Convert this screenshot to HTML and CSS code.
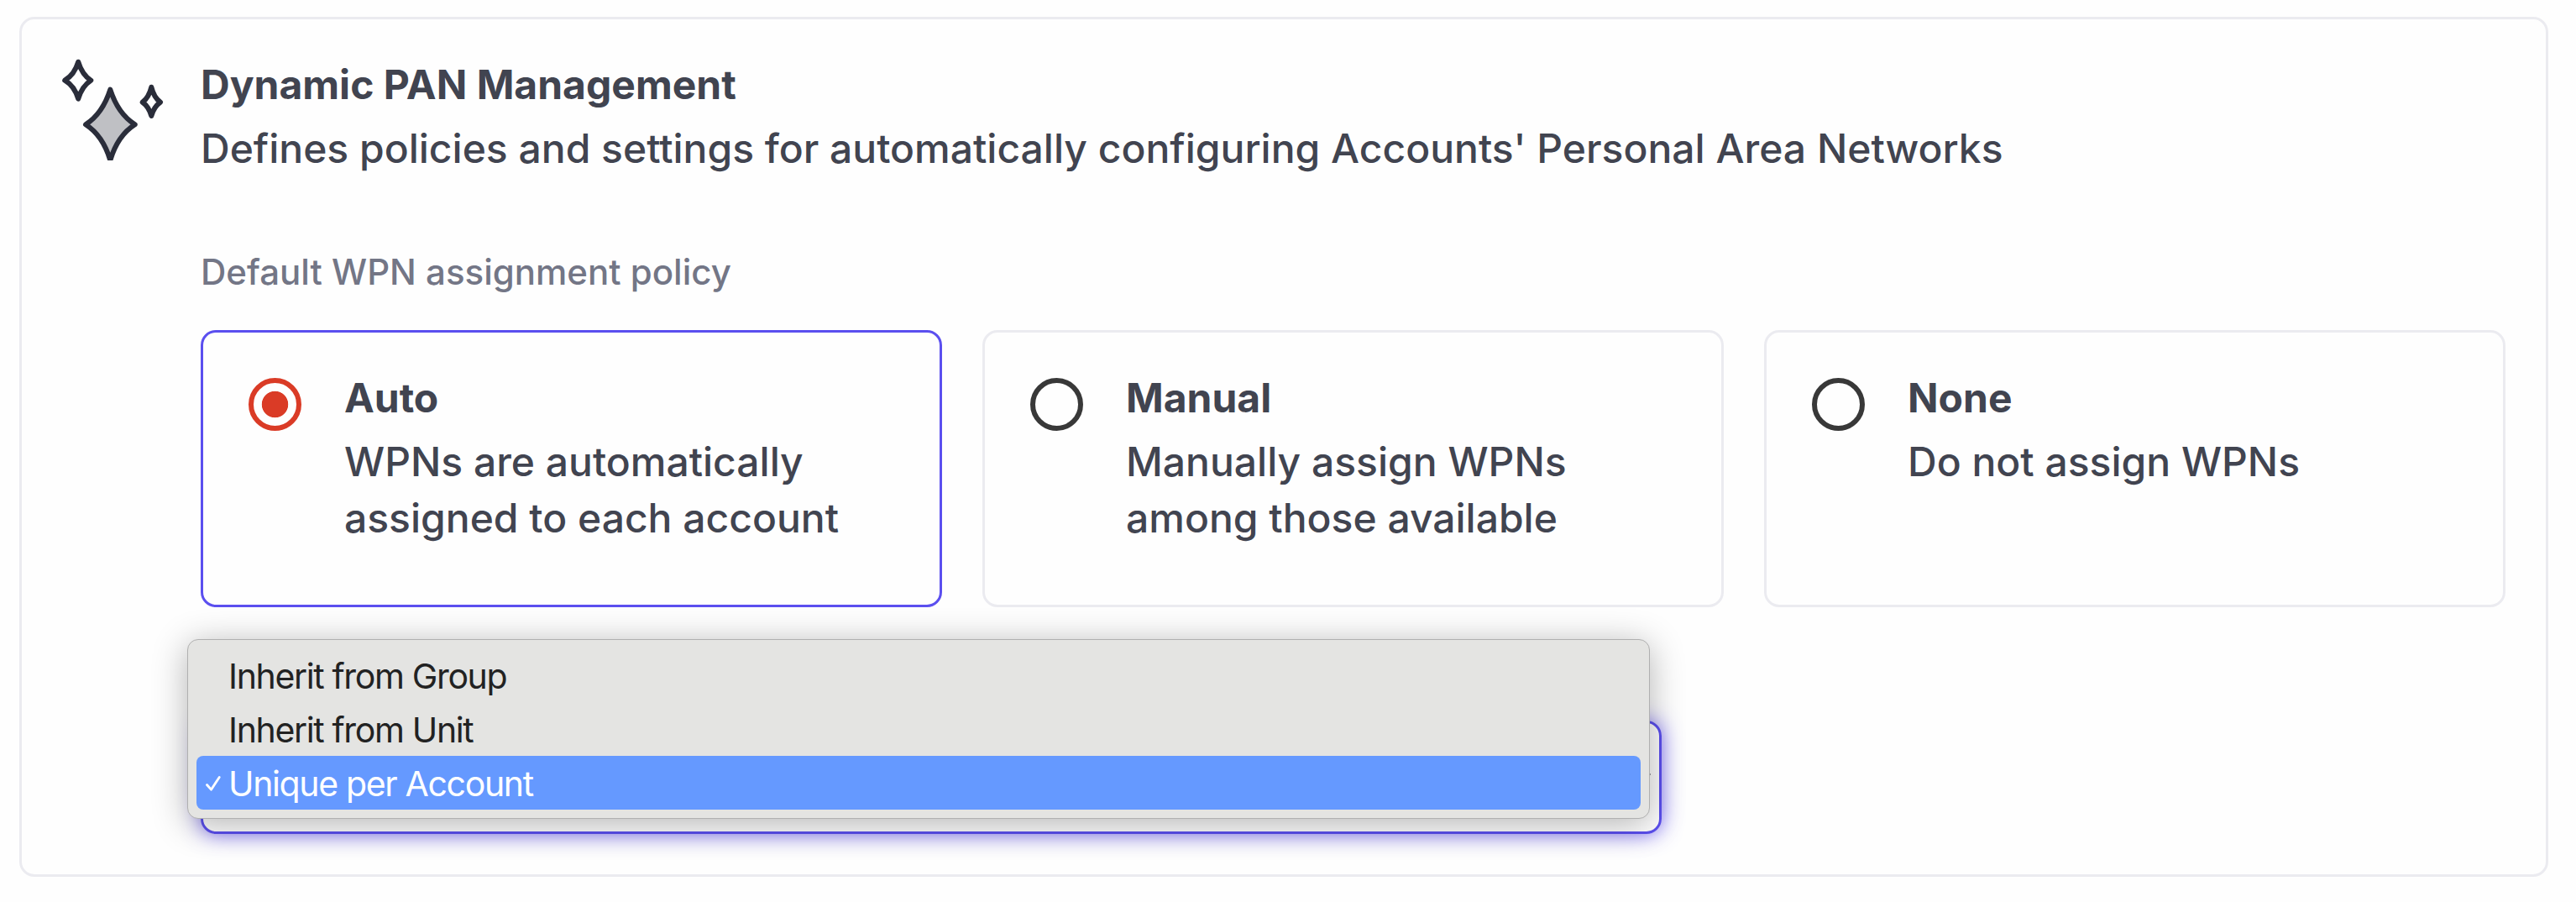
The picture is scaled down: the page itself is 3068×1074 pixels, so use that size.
FILE: index.html
```html
<!DOCTYPE html>
<html lang="en">
<head>
<meta charset="utf-8">
<title>Dynamic PAN Management</title>
<link rel="stylesheet" href="styles.css">
</head>
<body>
<section class="panel">
  <svg class="panel-icon" viewBox="0 0 128 124" fill="none" stroke="#2a2d3a" stroke-width="6" stroke-linejoin="round">
    <path d="M22.200 6.700Q26.700 22 37.300 28.700Q26.700 35.400 22.200 50.700Q17.700 35.400 6.200 28.700Q17.700 22 22.200 6.700Z"/>
    <path d="M109.300 36.700Q112.300 49 120 54.700Q112.300 60 109.300 71Q106.300 60 98.700 54.700Q106.300 49 109.300 36.700Z"/>
    <path fill="#bfc0c4" d="M60.300 39.700Q69.500 68.500 89.700 81.300Q69 94.500 60.300 124Q51.600 94.500 31 81.300Q51.100 68.500 60.300 39.700Z"/>
  </svg>
  <div class="panel-body">
    <h2 class="title">Dynamic PAN Management</h2>
    <p class="text">Defines policies and settings for automatically configuring Accounts' Personal Area Networks</p>
    <p class="label">Default WPN assignment policy</p>
    <div class="options">
      <div class="option option-selected">
        <span class="radio radio-on"></span>
        <div>
          <h3 class="title">Auto</h3>
          <p class="text">WPNs are automatically<br>assigned to each account</p>
        </div>
      </div>
      <div class="option">
        <span class="radio"></span>
        <div>
          <h3 class="title">Manual</h3>
          <p class="text">Manually assign WPNs<br>among those available</p>
        </div>
      </div>
      <div class="option">
        <span class="radio"></span>
        <div>
          <h3 class="title">None</h3>
          <p class="text">Do not assign WPNs</p>
        </div>
      </div>
    </div>
    <div class="select">
      <svg class="chevron" viewBox="0 0 24 14" fill="none" stroke="#414450" stroke-width="3"><path d="M1 1L12 12L23 1"/></svg>
      <ul class="menu">
        <li class="item">Inherit from Group</li>
        <li class="item">Inherit from Unit</li>
        <li class="item item-active">
          <svg class="check" viewBox="0 0 20 20" fill="none" stroke="#fff" stroke-width="2.800" stroke-linecap="round" stroke-linejoin="round"><path d="M2.500 11.500L7.500 17.200L17.200 2.500"/></svg>Unique per Account</li>
      </ul>
    </div>
  </div>
</section>
</body>
</html>
```
FILE: styles.css
```css
* { box-sizing: border-box; margin: 0; padding: 0; }
body {
  padding: 20px 33px 30px 23px;
  background: #fefefe;
  color: #414450;
  font-family: Inter, "Liberation Sans", sans-serif;
}
.panel {
  display: flex;
  height: 1024px;
  padding: 44px 48px 0 45px;
  border: 3px solid #ebebf0;
  border-radius: 18px;
}
.panel-icon { width: 128px; height: 124px; margin-right: 40px; flex: none; }
.panel-body { flex: 1; }
.title { font-size: 48px; line-height: 67px; font-weight: 700; }
.text { margin-top: 9px; font-size: 48px; line-height: 67px; font-weight: 500; }
.label {
  margin-top: 84px;
  font-size: 42px;
  line-height: 60px;
  font-weight: 500;
  color: #737686;
}
.options { display: grid; grid-template-columns: repeat(3, 1fr); gap: 48px; margin-top: 39px; }
.option {
  display: flex;
  gap: 51px;
  height: 330px;
  padding: 44px 54px;
  border: 3px solid #ebebf0;
  border-radius: 18px;
}
.option-selected { border-color: #5b4fef; }
.radio {
  flex: none;
  width: 63px;
  height: 63px;
  margin-top: 10px;
  border: 6px solid #383838;
  border-radius: 50%;
}
.radio-on { border-color: #da3b26; background: radial-gradient(circle, #da3b26 15.300px, transparent 16.100px); }
.select {
  position: relative;
  width: 1740px;
  height: 135px;
  margin-top: 135px;
  border: 3px solid #5b4fef;
  border-radius: 18px;
  box-shadow: 0 0 24px rgba(80, 60, 255, .7);
}
.chevron { position: absolute; right: 10px; top: 59px; width: 24px; height: 14px; }
.menu {
  position: absolute;
  left: -19px;
  top: -100px;
  width: 1742px;
  height: 214px;
  padding: 10px;
  list-style: none;
  background: #e4e4e2;
  border: 1px solid #b0b0b0;
  border-radius: 13px;
  box-shadow: 0 6px 42px rgba(0, 0, 0, .3);
}
.item {
  position: relative;
  height: 64px;
  padding-left: 38px;
  border-radius: 8px;
  color: #222;
  font-size: 41px;
  line-height: 66px;
  letter-spacing: -1.350px;
}
.item-active { background: #6599ff; color: #fff; }
.check { position: absolute; left: 10px; top: 23px; width: 20px; height: 20px; }
```
